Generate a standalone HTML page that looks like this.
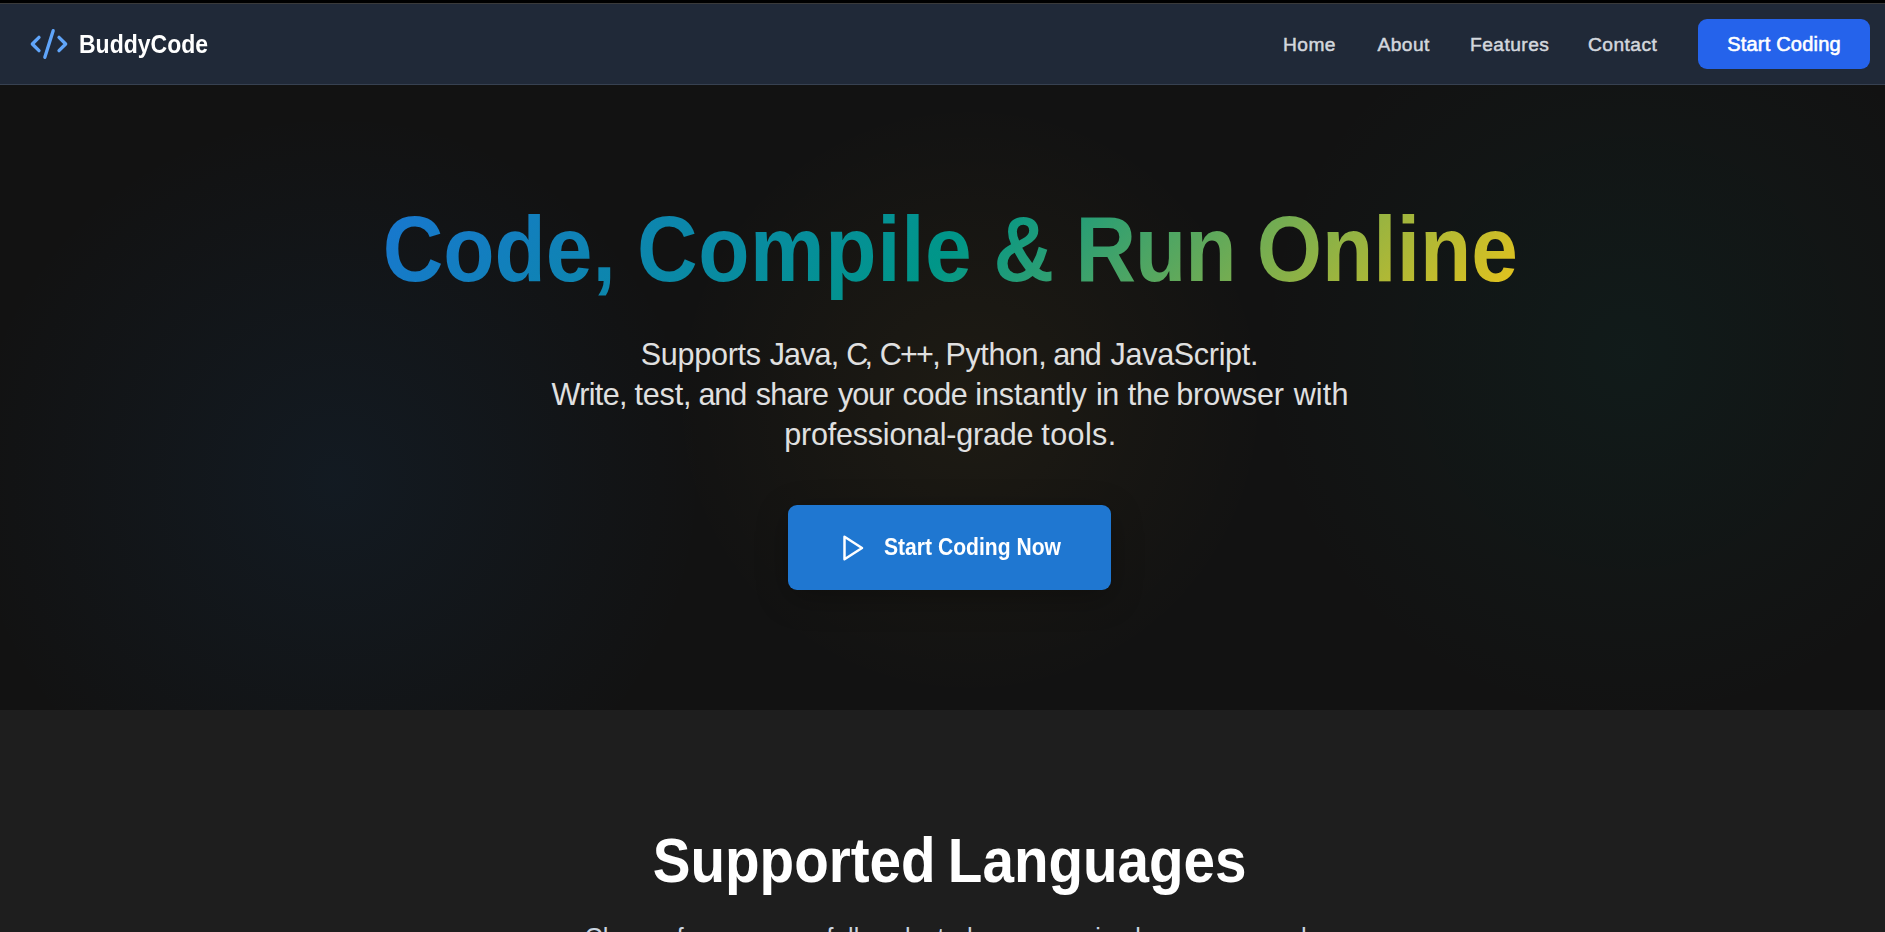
<!DOCTYPE html>
<html lang="en">
<head>
<meta charset="utf-8">
<title>BuddyCode - Code, Compile &amp; Run Online</title>
<style>
*{box-sizing:border-box;margin:0;padding:0}
html,body{width:1885px;height:932px;overflow:hidden;background:#1e1e1e}
body{font-family:"Liberation Sans",sans-serif;color:#fff;position:relative}
.page{position:absolute;left:0;top:0;width:1900px;height:932px;overflow:hidden}
.topstrip{position:absolute;left:0;top:0;width:1900px;height:4px;background:#000;border-bottom:1px solid #3a3a3a}
header.nav{position:absolute;left:0;top:4px;width:1900px;height:81px;background:#202938;border-bottom:1px solid #374151}
.brand{position:absolute;left:29px;top:20px;height:40px;width:200px;display:block;text-decoration:none}
.brand svg{position:absolute;left:0;top:0;width:40px;height:40px;display:block}
.brand .name{position:absolute;left:49.5px;top:0;line-height:40px;font-size:25px;font-weight:700;color:#fff;white-space:nowrap;transform:scaleX(.92);transform-origin:0 50%}
nav a{position:absolute;top:0;height:80px;line-height:81px;font-size:19.2px;color:#d3d7dd;text-decoration:none;white-space:nowrap;letter-spacing:.45px;-webkit-text-stroke:.5px #d3d7dd}
.cta-top{position:absolute;left:1698px;top:15px;width:172px;height:50px;border-radius:9px;background:#2563eb;color:#fff;font-size:20px;line-height:50.6px;text-align:center;text-decoration:none;white-space:nowrap;letter-spacing:.2px;-webkit-text-stroke:.6px #fff}
section.hero{position:absolute;left:0;top:85px;width:1900px;height:625px;background:#121212;overflow:hidden}
.glow{position:absolute;border-radius:50%}
.g1{left:-35px;top:26px;width:740px;height:740px;background:radial-gradient(circle closest-side,rgba(25,118,210,.082) 0%,rgba(25,118,210,0) 100%)}
.g2{left:1258px;top:-102px;width:740px;height:740px;background:radial-gradient(circle closest-side,rgba(0,150,136,.068) 0%,rgba(0,150,136,0) 100%)}
.g3{left:670px;top:15px;width:600px;height:600px;background:radial-gradient(circle closest-side,rgba(251,192,45,.05) 0%,rgba(251,192,45,0) 100%)}
h1{position:absolute;left:0;top:103.7px;width:1900px;text-align:center;font-size:92px;line-height:120px;font-weight:700;white-space:nowrap}
h1 span{background:linear-gradient(135deg,#1976d2 0%,#009688 50%,#ecc419 100%);-webkit-background-clip:text;background-clip:text;color:transparent;-webkit-text-fill-color:transparent;display:inline-block;transform:scaleX(.9122);transform-origin:50% 50%;word-spacing:-2.3px}
h1 i{font-style:normal}
h1 .w2{letter-spacing:.68px}
h1 .w4{letter-spacing:-1.1px}
p.sub{position:absolute;left:0;top:249px;width:1900px;text-align:left;font-size:30.5px;line-height:40px;color:#e0e0e0;white-space:nowrap}
p.sub>span{display:block}
p.sub>span>span{display:inline-block}
a.cta{position:absolute;left:788px;top:420px;width:323px;height:85px;border-radius:9px;background:#1f77d1;box-shadow:0 8px 32px rgba(0,0,0,.28);color:#fff;text-decoration:none}
a.cta svg{position:absolute;left:48.7px;top:27.8px;width:30px;height:30px}
a.cta b{position:absolute;left:95.6px;top:0;line-height:84.3px;font-size:24px;font-weight:700;white-space:nowrap;transform:scaleX(.879);transform-origin:0 50%}
section.langs{position:absolute;left:0;top:710px;width:1900px;height:222px;background:#1e1e1e;overflow:hidden}
h2{position:absolute;left:0;top:110px;width:1900px;text-align:center;font-size:63px;line-height:80px;font-weight:700;color:#fff;white-space:nowrap}
h2 span{display:inline-block;transform:scaleX(.898);transform-origin:50% 50%;word-spacing:-3.8px}
p.lead{position:absolute;left:-4.3px;top:209px;width:1900px;text-align:center;font-size:25px;line-height:36px;color:#cbd5e1;white-space:nowrap;letter-spacing:.27px}
</style>
</head>
<body>
<div class="page">
<div class="topstrip"></div>
<header class="nav">
  <a class="brand" href="#home">
    <svg viewBox="0 0 24 24" fill="none" stroke="#60a5fa" stroke-width="2" stroke-linecap="round" stroke-linejoin="round"><path d="m18 16 4-4-4-4"/><path d="m6 8-4 4 4 4"/><path d="m14.5 4-5 16"/></svg>
    <span class="name">BuddyCode</span>
  </a>
  <nav>
    <a href="#home" style="left:1283px">Home</a>
    <a href="#about" style="left:1377.4px">About</a>
    <a href="#features" style="left:1470px">Features</a>
    <a href="#contact" style="left:1588px">Contact</a>
  </nav>
  <a class="cta-top" href="#start">Start Coding</a>
</header>
<section class="hero" id="home">
  <div class="glow g1"></div>
  <div class="glow g2"></div>
  <div class="glow g3"></div>
  <h1><span>Code, <i class="w2">Compile</i> &amp; <i class="w4">Run</i> Online</span></h1>
  <p class="sub"><span class="l1"><span style="letter-spacing:-0.25px;margin-left:640.70px">Supports</span> <span style="letter-spacing:-0.84px;margin-left:0.41px">Java,</span> <span style="letter-spacing:-3.68px;margin-left:-0.60px">C,</span> <span style="letter-spacing:-1.71px;margin-left:1.76px">C++,</span> <span style="letter-spacing:-0.37px;margin-left:-1.97px">Python,</span> <span style="letter-spacing:-1.20px;margin-left:-1.59px">and</span> <span style="letter-spacing:-0.30px;margin-left:1.60px">JavaScript.</span></span><span class="l2"><span style="letter-spacing:-0.61px;margin-left:551.50px">Write,</span> <span style="letter-spacing:-0.16px;margin-left:-0.95px">test,</span> <span style="letter-spacing:-1.04px;margin-left:-1.40px">and</span> <span style="letter-spacing:-0.76px;margin-left:1.12px">share</span> <span style="letter-spacing:-0.96px;margin-left:1.20px">your</span> <span style="letter-spacing:-0.32px;margin-left:0.64px">code</span> <span style="letter-spacing:-0.04px;margin-left:-0.72px">instantly</span> <span style="letter-spacing:-0.48px;margin-left:0.76px">in</span> <span style="letter-spacing:-0.24px;margin-left:0.56px">the</span> <span style="letter-spacing:-0.13px;margin-left:-1.68px">browser</span> <span style="letter-spacing:0.16px;margin-left:1.33px">with</span></span><span class="l3"><span style="letter-spacing:-0.21px;margin-left:784.30px">professional-grade</span> <span style="letter-spacing:0.38px;margin-left:-0.27px">tools.</span></span></p>
  <a class="cta" href="#start">
    <svg viewBox="0 0 24 24" fill="none" stroke="#fff" stroke-width="2" stroke-linecap="round" stroke-linejoin="round"><polygon points="6 3 20 12 6 21 6 3"/></svg>
    <b>Start Coding Now</b>
  </a>
</section>
<section class="langs" id="features">
  <h2><span>Supported Languages</span></h2>
  <p class="lead">Choose <span style="margin-left:-2.7px">from</span> <span style="margin-left:-1.2px">our</span> <span style="margin-left:-1.2px">carefully</span> <span style="margin-left:-1.4px;letter-spacing:.17px">selected</span> <span style="margin-left:-.8px">programming</span> <span style="margin-left:-1.4px">languages</span> <span style="margin-left:4.2px">and</span></p>
</section>
</div>
</body>
</html>
